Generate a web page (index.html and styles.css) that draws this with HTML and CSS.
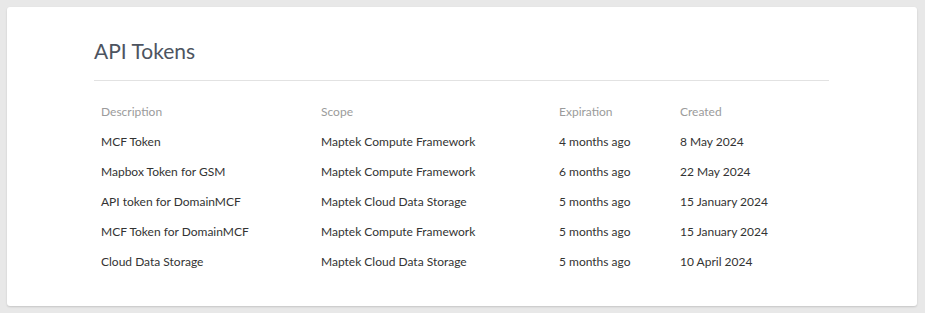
FILE: index.html
```html
<!DOCTYPE html>
<html>
<head>
<meta charset="utf-8">
<link rel="stylesheet" href="styles.css">
</head>
<body>
<div class="card">
  <h1 class="title">API Tokens</h1>
  <div class="table">
    <div class="row head"><span>Description</span><span>Scope</span><span>Expiration</span><span>Created</span></div>
    <div class="row"><span>MCF Token</span><span>Maptek Compute Framework</span><span>4 months ago</span><span>8 May 2024</span></div>
    <div class="row"><span>Mapbox Token for GSM</span><span>Maptek Compute Framework</span><span>6 months ago</span><span>22 May 2024</span></div>
    <div class="row"><span>API token for DomainMCF</span><span>Maptek Cloud Data Storage</span><span>5 months ago</span><span>15 January 2024</span></div>
    <div class="row"><span>MCF Token for DomainMCF</span><span>Maptek Compute Framework</span><span>5 months ago</span><span>15 January 2024</span></div>
    <div class="row"><span>Cloud Data Storage</span><span>Maptek Cloud Data Storage</span><span>5 months ago</span><span>10 April 2024</span></div>
  </div>
</div>
</body>
</html>
```
FILE: styles.css
```css
html, body { margin: 0; padding: 0; }
body {
  background: #e8e8e8;
  font-family: Lato, "Liberation Sans", sans-serif;
  padding: 7px 8px 7px 7px;
}
.card {
  background: #fff;
  border-radius: 3px;
  box-shadow: 0 1px 2px rgba(0,0,0,0.15);
  height: 299px;
  box-sizing: border-box;
  padding: 31px 88px 0 87px;
}
.title {
  margin: 0;
  font-weight: 400;
  font-size: 21px;
  color: #4d5460;
  line-height: 26px;
  padding-bottom: 16px;
  border-bottom: 1px solid #e2e2e2;
}
.table { padding-top: 15px; }
.row {
  display: grid;
  grid-template-columns: 220px 238px 121px 1fr;
  height: 30px;
  align-items: center;
  padding-left: 7px;
  font-size: 12px;
  color: #333;
}
.head { color: #9b9b9b; }
```
